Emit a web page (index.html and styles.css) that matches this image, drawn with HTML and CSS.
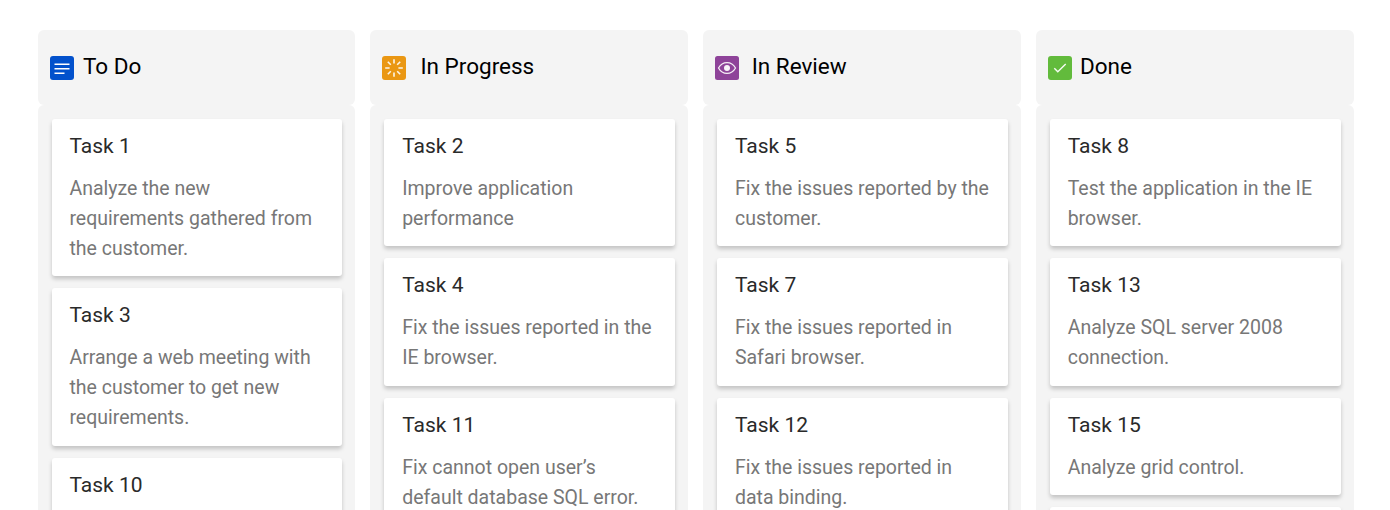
FILE: index.html
```html
<!DOCTYPE html>
<html lang="en">
<head>
<meta charset="utf-8">
<title>Kanban</title>
<link rel="stylesheet" href="styles.css">
</head>
<body>
<main class="board">
  <section class="column">
    <header class="head todo">
      <svg class="icon" viewBox="0 0 24 24"><rect width="24" height="24" rx="3" fill="#0251cc"/><path d="M4.5 8.3h15M4.5 12.8h15M4.5 17.2h10" stroke="#fff" stroke-width="1.4" fill="none"/></svg>
      <h2 class="name">To Do</h2>
    </header>
    <div class="cards">
      <article class="card"><h3 class="title">Task 1</h3><p class="text">Analyze the new<br>requirements gathered from<br>the customer.</p></article>
      <article class="card"><h3 class="title">Task 3</h3><p class="text">Arrange a web meeting with<br>the customer to get new<br>requirements.</p></article>
      <article class="card"><h3 class="title">Task 10</h3></article>
    </div>
  </section>
  <section class="column">
    <header class="head progress">
      <svg class="icon" viewBox="0 0 24 24"><rect width="24" height="24" rx="3" fill="#ea9713"/><path d="M12 3.2v4.4M12 16.4v4.4M3.2 12h4.4M16.4 12h4.4M5.8 5.8l3 3M15.2 15.2l3 3M5.8 18.2l3-3M15.2 8.8l3-3" stroke="#fff" stroke-opacity=".9" stroke-width="1.6" fill="none"/></svg>
      <h2 class="name">In Progress</h2>
    </header>
    <div class="cards">
      <article class="card"><h3 class="title">Task 2</h3><p class="text">Improve application<br>performance</p></article>
      <article class="card"><h3 class="title">Task 4</h3><p class="text">Fix the issues reported in the<br>IE browser.</p></article>
      <article class="card"><h3 class="title">Task 11</h3><p class="text">Fix cannot open user’s<br>default database SQL error.</p></article>
    </div>
  </section>
  <section class="column">
    <header class="head review">
      <svg class="icon" viewBox="0 0 24 24"><rect width="24" height="24" rx="2.5" fill="#8e4399"/><path d="M3.5 12C7.5 4.8 16.5 4.8 20.5 12C16.5 19.2 7.5 19.2 3.5 12Z" stroke="#fff" stroke-opacity=".9" stroke-width="1.3" fill="none"/><circle cx="12" cy="12" r="3" fill="#fff" fill-opacity=".94"/></svg>
      <h2 class="name">In Review</h2>
    </header>
    <div class="cards">
      <article class="card"><h3 class="title">Task 5</h3><p class="text">Fix the issues reported by the<br>customer.</p></article>
      <article class="card"><h3 class="title">Task 7</h3><p class="text">Fix the issues reported in<br>Safari browser.</p></article>
      <article class="card"><h3 class="title">Task 12</h3><p class="text">Fix the issues reported in<br>data binding.</p></article>
    </div>
  </section>
  <section class="column">
    <header class="head done">
      <svg class="icon" viewBox="0 0 24 24"><rect width="24" height="24" rx="3" fill="#62bb3c"/><path d="M6.3 12.3L9.8 15.8L17.7 7.9" stroke="#fff" stroke-opacity=".94" stroke-width="1.4" fill="none"/></svg>
      <h2 class="name">Done</h2>
    </header>
    <div class="cards">
      <article class="card"><h3 class="title">Task 8</h3><p class="text">Test the application in the IE<br>browser.</p></article>
      <article class="card"><h3 class="title">Task 13</h3><p class="text">Analyze SQL server 2008<br>connection.</p></article>
      <article class="card"><h3 class="title">Task 15</h3><p class="text">Analyze grid control.</p></article>
      <article class="card"></article>
    </div>
  </section>
</main>
</body>
</html>
```
FILE: styles.css
```css
body {
  margin: 0;
  background: #fff;
  font-family: Roboto, sans-serif;
  overflow: hidden;
}
.board {
  box-sizing: border-box;
  height: 510px;
  padding: 30px 36.3px 0 37.7px;
  display: grid;
  grid-template-columns: repeat(4, 1fr);
  gap: 15px;
  overflow: hidden;
}
.column {
  display: flex;
  flex-direction: column;
  min-width: 0;
}
.head {
  box-sizing: border-box;
  flex: none;
  height: 74.75px;
  padding: 0 12px;
  display: flex;
  align-items: center;
  background: #f4f4f4;
  border-radius: 6px;
}
.icon {
  width: 24px;
  height: 24px;
  flex: none;
  margin-top: 1px;
}
.name {
  margin: 0 0 2px 9.3px;
  font-size: 22.5px;
  line-height: 30px;
  font-weight: 400;
  color: #000;
}
.progress .name { margin-left: 14px; }
.review .name { margin-left: 12.5px; }
.done .name { margin-left: 8px; }
.cards {
  flex: none;
  min-height: 500px;
  padding: 14px 13.1px 0 13.85px;
  display: flex;
  flex-direction: column;
  gap: 12px;
  background: #f4f4f4;
  border-radius: 6px 6px 0 0;
}
.card {
  box-sizing: border-box;
  flex: none;
  min-height: 97.5px;
  padding: 12px 17.9px 12.5px;
  background: #fff;
  border-radius: 3px;
  box-shadow: 0 3px 4px rgba(0, 0, 0, .2);
}
.title {
  margin: 0 0 13px;
  font-size: 21px;
  line-height: 30px;
  font-weight: 400;
  color: #2a2a2a;
}
.text {
  margin: 0;
  font-size: 19.5px;
  line-height: 30px;
  font-weight: 400;
  color: #777;
  white-space: nowrap;
}
```
